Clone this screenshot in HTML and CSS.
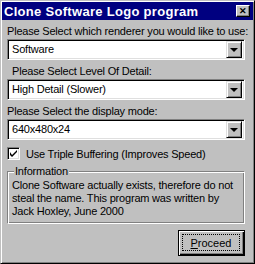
FILE: index.html
```html
<!DOCTYPE html>
<html lang="en">
<head>
  <meta charset="UTF-8" />
  <title>Clone Software Logo program</title>
  <link rel="stylesheet" href="styles.css">
</head>
<body>
  <div class="window">
    <div class="titlebar">
      <span class="title">Clone Software Logo program</span>
      <button class="close-btn"><span class="x">&#10005;</span></button>
    </div>

    <div class="content">
      <p class="label">Please Select which renderer you would like to use:</p>
      <div class="combo">
        <span class="combo-value">Software</span>
        <span class="drop"><span class="arrow"></span></span>
      </div>

      <p class="label label-indent">Please Select Level Of Detail:</p>
      <div class="combo">
        <span class="combo-value">High Detail (Slower)</span>
        <span class="drop"><span class="arrow"></span></span>
      </div>

      <p class="label">Please Select the display mode:</p>
      <div class="combo">
        <span class="combo-value">640x480x24</span>
        <span class="drop"><span class="arrow"></span></span>
      </div>

      <div class="check-row">
        <span class="checkbox">
          <svg width="9" height="9" viewBox="0 0 9 9"><path d="M1 3v3l2 2 5-5V1L3 6z" fill="#000"/></svg>
        </span>
        <span>Use Triple Buffering (Improves Speed)</span>
      </div>

      <div class="group">
        <span class="legend">Information</span>
        <p class="info">Clone Software actually exists, therefore do not steal the name. This program was written by Jack Hoxley, June 2000</p>
      </div>

      <div class="actions">
        <button class="btn-default"><span class="focus"><u>P</u>roceed</span></button>
      </div>
    </div>
  </div>
</body>
</html>
```

FILE: styles.css
```css
body {
  margin: 0;
  font-family: 'Liberation Sans', Arial, sans-serif;
  font-size: 11px;
  letter-spacing: -0.2px;
  color: #000;
  background: #c0c0c0;
}

.window {
  width: 255px;
  height: 264px;
  box-sizing: border-box;
  background: #c0c0c0;
  border: 1px solid;
  border-color: #c0c0c0 #000 #000 #c0c0c0;
  box-shadow: inset 1px 1px #fff, inset -1px -1px #808080;
  padding: 1px;
}

.titlebar {
  height: 18px;
  background: #000080;
  color: #fff;
  display: flex;
  align-items: center;
  justify-content: space-between;
  padding: 0 3px 0 2px;
}

.title {
  font-weight: bold;
  font-size: 13px;
  letter-spacing: 0.3px;
}

.close-btn {
  width: 14px;
  height: 12px;
  padding: 0;
  background: #c0c0c0;
  border: 1px solid;
  border-color: #fff #000 #000 #fff;
  box-shadow: inset -1px -1px #808080;
  display: flex;
  align-items: center;
  justify-content: center;
}

.close-btn .x {
  font-size: 9px;
  font-weight: bold;
  line-height: 1;
  color: #000;
}

.content {
  padding: 4px 5px 0 5px;
}

.label {
  margin: 0;
  height: 15px;
  line-height: 15px;
  white-space: nowrap;
}

.label-indent {
  padding-left: 5px;
}

.combo {
  height: 21px;
  box-sizing: border-box;
  background: #fff;
  border: 1px solid;
  border-color: #808080 #fff #fff #808080;
  box-shadow: inset 1px 1px #000, inset -1px -1px #dfdfdf;
  display: flex;
  align-items: center;
  justify-content: space-between;
  padding: 1px 2px 1px 4px;
  margin: 0 3px 4px 0;
}

.combo-value {
  line-height: 17px;
}

.drop {
  width: 16px;
  height: 17px;
  box-sizing: border-box;
  background: #c0c0c0;
  border: 1px solid;
  border-color: #dfdfdf #000 #000 #dfdfdf;
  box-shadow: inset 1px 1px #fff, inset -1px -1px #808080;
  display: flex;
  align-items: center;
  justify-content: center;
}

.arrow {
  width: 0;
  height: 0;
  border-left: 4px solid transparent;
  border-right: 4px solid transparent;
  border-top: 4px solid #000;
  margin-top: 1px;
}

.check-row {
  display: flex;
  align-items: center;
  gap: 6px;
  margin-top: 6px;
  height: 15px;
}

.checkbox {
  width: 13px;
  height: 13px;
  box-sizing: border-box;
  background: #fff;
  border: 1px solid;
  border-color: #808080 #fff #fff #808080;
  box-shadow: inset 1px 1px #000, inset -1px -1px #dfdfdf;
  display: flex;
  align-items: center;
  justify-content: center;
}

.group {
  position: relative;
  margin: 10px 3px 0 0;
  border: 1px solid;
  border-color: #808080 #fff #fff #808080;
  box-shadow: inset 1px 1px #fff, inset -1px -1px #808080;
  padding: 7px 2px 6px 4px;
  height: 53px;
  box-sizing: border-box;
}

.legend {
  position: absolute;
  top: -7px;
  left: 6px;
  background: #c0c0c0;
  padding: 0 1px;
  line-height: 13px;
}

.info {
  margin: 0;
  line-height: 13px;
}

.actions {
  display: flex;
  justify-content: flex-end;
  margin: 6px 3px 0 0;
}

.btn-default {
  width: 67px;
  height: 26px;
  padding: 0;
  font-family: inherit;
  font-size: 11px;
  background: #c0c0c0;
  border: 1px solid #000;
  box-shadow: inset 1px 1px #fff, inset -1px -1px #000, inset -2px -2px #808080;
  display: flex;
  align-items: stretch;
  justify-content: stretch;
}

.btn-default .focus {
  flex: 1;
  margin: 3px 4px 4px 3px;
  border: 1px dotted #000;
  display: flex;
  align-items: center;
  justify-content: center;
}
```
